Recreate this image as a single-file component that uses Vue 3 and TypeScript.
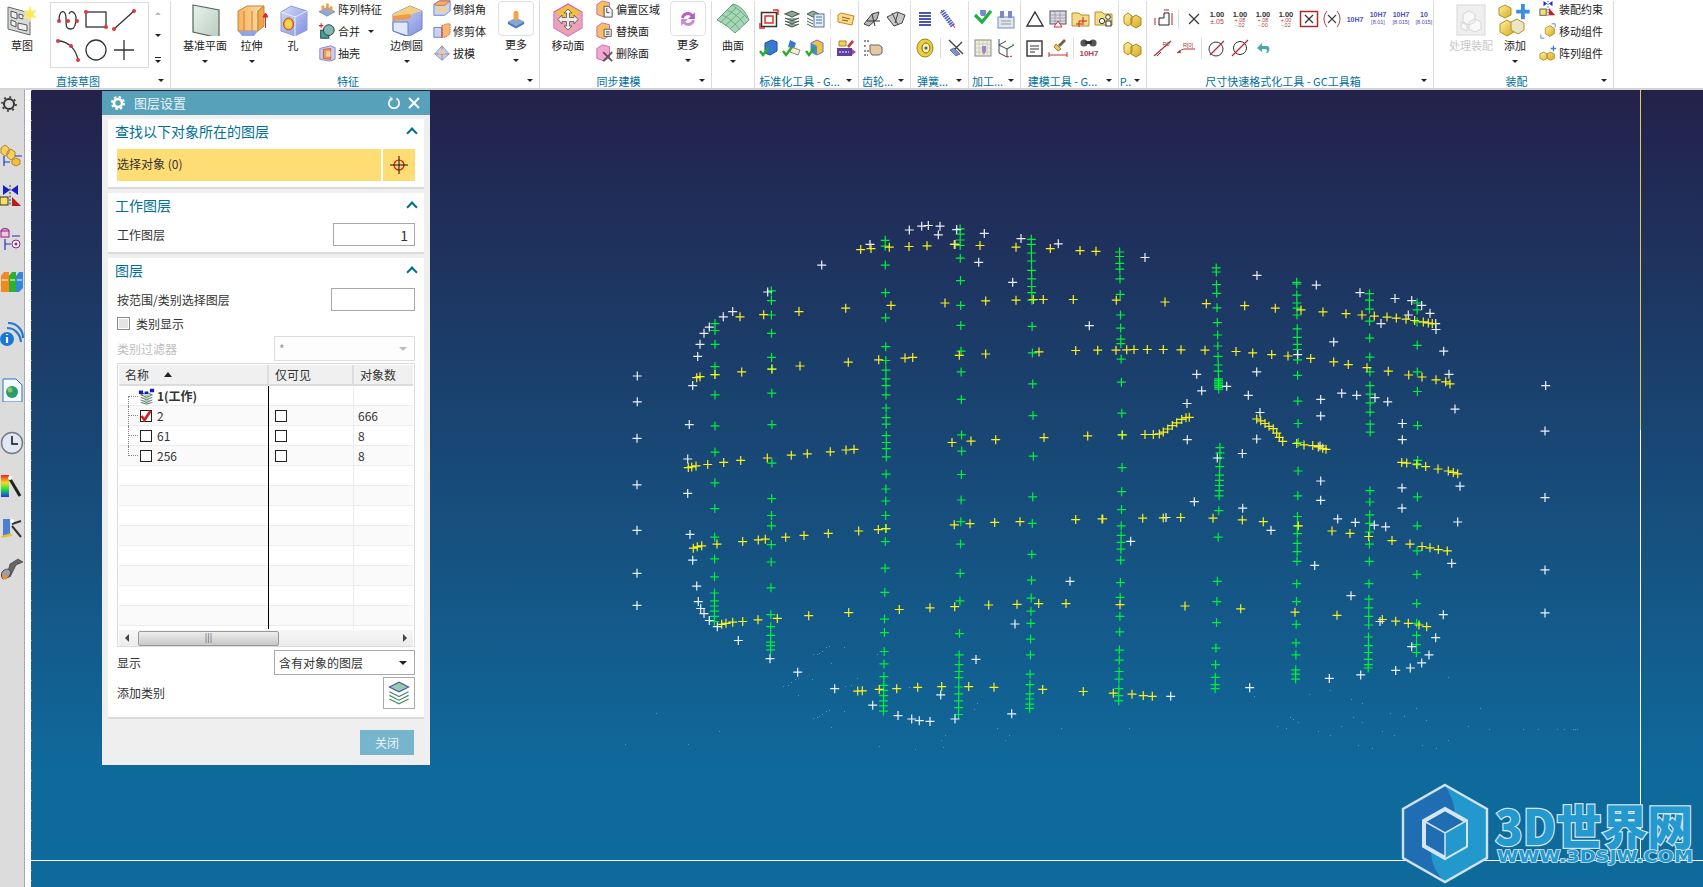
<template>
  <div class="app">
    <!-- shared icon symbols -->
    <svg class="defs" aria-hidden="true">
      <defs>
        <linearGradient id="gPlane" x1="0" y1="0" x2="1" y2="1"><stop offset="0" stop-color="#e9f2ec" /><stop offset="1" stop-color="#b9cdc0" /></linearGradient>
        <linearGradient id="gOrange" x1="0" y1="0" x2="1" y2="0"><stop offset="0" stop-color="#f6b25a" /><stop offset="1" stop-color="#fbe0a8" /></linearGradient>
        <linearGradient id="gBlue" x1="0" y1="0" x2="1" y2="1"><stop offset="0" stop-color="#d5dcf8" /><stop offset="1" stop-color="#7f8fe0" /></linearGradient>
        <linearGradient id="gYellow" x1="0" y1="0" x2="1" y2="1"><stop offset="0" stop-color="#fff3a0" /><stop offset="1" stop-color="#d8a820" /></linearGradient>
      </defs>

      <!-- big ribbon icons -->
      <symbol id="sketch" viewBox="0 0 32 32">
        <path d="M2 3 24 9v22L2 25z" fill="#d8dcd8" stroke="#666" />
        <path d="M5 7l6 2v6l-6-2zM13 10l4 1v4l-4-1zM5 16l5 2v5l-5-2zM12 19l9 2v6l-9-2z" fill="#eef0ee" stroke="#555" />
        <path d="M24 2l1.600 5 5.400-1-4 4 4 4-5.400-1L24 18l-1.600-5-5.400 1 4-4-4-4 5.400 1z" fill="#ffe94a" stroke="#f7f3c0" stroke-width=".6" />
      </symbol>
      <symbol id="datum" viewBox="0 0 32 32"><path d="M4 1 30 6v28L4 28z" fill="url(#gPlane)" stroke="#55655c" stroke-width="1.200" /></symbol>
      <symbol id="extrude" viewBox="0 0 32 32">
        <path d="M2 7 11 2h17l-6 5v20H2z" fill="url(#gOrange)" stroke="#c08a3a" />
        <path d="M22 7l6-5v20l-6 5z" fill="#f0a64a" stroke="#c08a3a" />
        <path d="M8 7v20M16 7v20" stroke="#d47a38" fill="none" />
        <path d="M2 27h20l-4 5H6z" fill="#8ea6e8" />
        <path d="M29.500 24V11M27 13l2.500-4 2.500 4z" fill="#d8282a" stroke="#d8282a" />
      </symbol>
      <symbol id="hole" viewBox="0 0 32 32">
        <path d="M4 8 14 2l16 5v19l-12 6L4 27z" fill="url(#gBlue)" stroke="#8e9bd8" />
        <path d="M4 8l14 5 12-6M18 13v19" fill="none" stroke="#e9edfc" />
        <ellipse cx="11.500" cy="20" rx="5" ry="6" fill="#f09a20" stroke="#c85020" />
        <ellipse cx="11.500" cy="20" rx="3.500" ry="4.500" fill="#f5d64a" />
      </symbol>
      <symbol id="blend" viewBox="0 0 32 32">
        <path d="M2 10 19 2l12 5v18l-14 8L2 27z" fill="url(#gBlue)" stroke="#6f7fd0" />
        <path d="M2 10 19 2l12 5-2 1C24 8 20 10 18 13L2 16z" fill="#f5d07a" />
        <path d="M2 12 18 10c3 0 3 3 0 5L2 17z" fill="#ec9a50" />
        <path d="M2 18h15v14L2 27z" fill="#dfe7fa" stroke="#6f7fd0" />
      </symbol>
      <symbol id="more1" viewBox="0 0 32 32">
        <path d="M3 20l13-6 13 6-13 7z" fill="#7fa8d8" />
        <path d="M3 20v4l13 7 13-7v-4l-13 7z" fill="#4a78b8" />
        <rect x="12" y="3" width="8" height="15" rx="3" fill="#f3a648" />
      </symbol>
      <symbol id="moveface" viewBox="0 0 34 34">
        <path d="M3 9 17 1l14 8v16l-14 8-14-8z" fill="#f0c040" stroke="#cf5fb8" stroke-width="1.200" />
        <path d="M3 9l14 8 14-8v16l-14 8-14-8z" fill="#e89ad8" opacity=".75" />
        <path d="M17 6l4 4h-2.500v4.500H23V12l4 4.500-4 4.500v-2.500h-4.500V23H21l-4 4-4-4h2.500v-4.500H11V21l-4-4.500L11 12v2.500h4.500V10H13z" fill="#eee" stroke="#555" stroke-width=".8" />
      </symbol>
      <symbol id="more2" viewBox="0 0 32 32">
        <path d="M6 14a10 10 0 0 1 17-5l3-3v10H16l4-4a6 6 0 0 0-10 3z" fill="#b45cc8" />
        <path d="M26 18a10 10 0 0 1-17 5l-3 3V16h10l-4 4a6 6 0 0 0 10-3z" fill="#c98ad8" />
      </symbol>
      <symbol id="surface" viewBox="0 0 34 34">
        <path d="M1 17 17 1c8 2 13 8 16 16L19 30C13 24 7 20 1 17z" fill="#a6d6b4" stroke="#5fa37a" />
        <path d="M6 12c7 3 13 8 18 15M11 7c7 3 13 8 18 15M16 2c5 3 11 8 15 13M4 20 20 5M9 23 25 8M14 26 29 12" fill="none" stroke="#5f9f78" stroke-width=".8" />
      </symbol>
      <symbol id="asmDisabled" viewBox="0 0 32 32">
        <rect x="2" y="1" width="28" height="30" fill="#efefef" stroke="#d8d8d8" />
        <path d="M8 10l6-3 6 3v8l-6 3-6-3zM14 18l6-3 6 3v7l-6 3-6-3zM6 18l6 3v6l-6-3z" fill="#f8f8f8" stroke="#d6d6d6" />
      </symbol>
      <symbol id="addComp" viewBox="0 0 34 34">
        <path d="M1 5l6-3 6 3v7l-6 3-6-3z" fill="url(#gYellow)" stroke="#b89020" />
        <path d="M2 21l7-4 7 4v8l-7 4-7-4z" fill="url(#gYellow)" stroke="#b89020" />
        <path d="M13 19l6-3 7 4v7l-6 4-7-4z" fill="#e9e6c8" stroke="#b89020" />
        <path d="M25 1h4v6h5v4h-5v6h-4v-6h-5V7h5z" transform="translate(-1 0) scale(.96)" fill="#3d8fe0" />
      </symbol>

      <!-- small ribbon icons -->
      <symbol id="pattern" viewBox="0 0 20 20">
        <path d="M1 13l9-5 9 5-9 5z" fill="#8fa6d8" stroke="#5d78b8" stroke-width=".6" />
        <rect x="4" y="6" width="3" height="6" rx="1" fill="#f0a040" /><rect x="9" y="4" width="3" height="6" rx="1" fill="#f0a040" /><rect x="13" y="7" width="3" height="6" rx="1" fill="#f0a040" />
      </symbol>
      <symbol id="unite" viewBox="0 0 20 20">
        <path d="M1 4h5M3.500 1.500v5" stroke="#d82020" stroke-width="1.200" />
        <rect x="3" y="9" width="9" height="9" fill="#3ca49c" stroke="#333" />
        <circle cx="12" cy="9" r="6" fill="#7fb8b0" stroke="#333" />
      </symbol>
      <symbol id="shell" viewBox="0 0 20 20">
        <path d="M2 5l12-3 5 2v13l-6 2-11-2z" fill="#c8ccf0" stroke="#7f88c0" />
        <path d="M6 6l8-1v12l-8-1z" fill="#f09858" stroke="#c05838" />
        <path d="M9 8h5v6H9z" fill="#f8d0a0" />
      </symbol>
      <symbol id="chamfer" viewBox="0 0 20 20">
        <path d="M1 5l6-4h12v11l-6 5H1z" fill="#c8d4f4" stroke="#6a7ac8" />
        <path d="M1 5l6-4h12l-6 5H4z" fill="#f0b060" stroke="#d06860" />
        <path d="M5 8h10v5H5z" fill="#f8d080" />
      </symbol>
      <symbol id="trim" viewBox="0 0 20 20">
        <path d="M1 6h9v11H1z" fill="#c8d4f4" stroke="#6a7ac8" />
        <path d="M10 4l5-2h4v11l-5 4h-4z" fill="#f5b878" stroke="#c06030" stroke-dasharray="1.500 1" />
        <path d="M10 6v11" stroke="#d03030" />
      </symbol>
      <symbol id="draft" viewBox="0 0 20 20">
        <path d="M10 2 2 11l8 7 8-7z" fill="#bcd2f0" stroke="#7a9ad0" />
        <path d="M10 2v16M2 11h16" stroke="#e05050" stroke-width=".8" />
        <path d="M6 11l4-6 4 6z" fill="#f6c0a0" />
      </symbol>
      <symbol id="offset" viewBox="0 0 20 20">
        <path d="M1 5l6-4 8 2v12l-6 4-8-3z" fill="#f5c060" stroke="#d060b0" />
        <path d="M9 7h5l4 4v8H9z" fill="#f4f4f4" stroke="#444" />
        <path d="M12 9v5h3" stroke="#444" fill="none" />
      </symbol>
      <symbol id="replace" viewBox="0 0 20 20">
        <path d="M1 5l6-4 8 2v12l-6 4-8-3z" fill="#f5c060" stroke="#d060b0" />
        <path d="M9 8h8v8H9z" fill="#f0f0f0" stroke="#555" />
        <path d="M11 11h4M11 13.500h4" stroke="#333" />
      </symbol>
      <symbol id="deleteFace" viewBox="0 0 20 20">
        <path d="M1 5l6-4 8 2v12l-6 4-8-3z" fill="#f0a8d0" stroke="#d060b0" />
        <path d="M8 9l10 10M18 9 8 19" stroke="#555" stroke-width="2" />
      </symbol>
      <symbol id="mate" viewBox="0 0 20 20">
        <path d="M5 1l4 3-4 3zM15 1l-4 3 4 3z" fill="#2030c8" />
        <rect x="1" y="10" width="7" height="7" fill="#f5e070" stroke="#555" />
        <path d="M11 17V9l7 8z" fill="#c82020" />
        <path d="M10 1v17" stroke="#333" stroke-dasharray="1.500 1.500" />
      </symbol>
      <symbol id="moveComp" viewBox="0 0 20 20">
        <path d="M7 7l5-3 5 3v6l-5 3-5-3z" fill="url(#gYellow)" stroke="#b89020" />
        <path d="M2 14v4h4M14 2h4v4" fill="none" stroke="#4a88c8" />
      </symbol>
      <symbol id="patComp" viewBox="0 0 20 20">
        <path d="M1 11l4-2 4 2v5l-4 2-4-2zM9 11l4-2 4 2v5l-4 2-4-2z" fill="url(#gYellow)" stroke="#b89020" />
        <path d="M16 2v6M13 5h6" stroke="#3d7fd0" stroke-width="1.400" />
      </symbol>

      <!-- tool grid icons -->
      <symbol id="tFrame" viewBox="0 0 20 20">
        <rect x="2.500" y="3.500" width="15" height="14" fill="none" stroke="#333" stroke-width="1.500" />
        <rect x="6" y="7" width="8" height="7" fill="#fff" stroke="#e03020" stroke-width="1.500" />
        <path d="M14 1h5v5M1 14v5h5" fill="none" stroke="#e03020" stroke-width="1.500" />
      </symbol>
      <symbol id="tStack" viewBox="0 0 20 20"><path d="M3 5l7-3 7 3-7 3zM3 9l7 3 7-3M3 12l7 3 7-3M3 15l7 3 7-3" fill="#8fa898" stroke="#4a5a50" stroke-width="1.100" /></symbol>
      <symbol id="tWork" viewBox="0 0 20 20"><path d="M3 8l7-3 7 3-7 3zM3 11l7 3 7-3M3 14l7 3 7-3M3 17l7 2 7-2" fill="#bcd8c0" stroke="#5a6a60" /><path d="M1 3h5v4H1zM14 1h5v4h-5zM8 4h4v3H8z" fill="#1020c0" /></symbol>
      <symbol id="tList" viewBox="0 0 20 20">
        <path d="M2 5l6-3 6 3-6 3zM2 9l6 3M2 12l6 3M2 15l6 3" fill="#98b0a0" stroke="#4a5a50" />
        <rect x="9" y="5" width="10" height="13" fill="#e8eef8" stroke="#5a7098" />
        <path d="M11 8h6M11 11h6M11 14h6" stroke="#3a78b0" />
      </symbol>
      <symbol id="tTag" viewBox="0 0 20 20"><path d="M2 6l3-2 13 3-2 9L2 13z" fill="#fbdc88" stroke="#d08020" /><path d="M6 8l8 2M6 11l6 1" stroke="#806020" /></symbol>
      <symbol id="tCheckA" viewBox="0 0 20 20"><path d="M6 5l7-3 5 2v9l-7 4-5-2z" fill="#3a78d8" stroke="#20509a" /><path d="M1 13l3 4 6-8" fill="none" stroke="#2eaa2e" stroke-width="2.400" /></symbol>
      <symbol id="tCheckB" viewBox="0 0 20 20"><path d="M8 2l6 3-2 6-6-2z" fill="#3a78d8" /><path d="M9 9l9 3-2 5-8-3z" fill="#f8f0c0" stroke="#888" /><path d="M1 13l3 4 6-8" fill="none" stroke="#2eaa2e" stroke-width="2.400" /></symbol>
      <symbol id="tCheckC" viewBox="0 0 20 20"><path d="M6 5l6-3 6 3v9l-6 3-6-3z" fill="#f5c040" stroke="#5a7ac8" /><path d="M6 5l6 3v9l-6-3z" fill="#4a88d8" /><path d="M1 13l3 4 6-8" fill="none" stroke="#2eaa2e" stroke-width="2.400" /></symbol>
      <symbol id="tChart" viewBox="0 0 20 20"><path d="M3 3h7v5H3z" fill="#f5d060" stroke="#b08020" /><path d="M11 8l5-6 2 2-5 6z" fill="#c04040" /><rect x="1" y="10" width="15" height="8" fill="#6040a0" /><path d="M3 14h10" stroke="#fff" stroke-dasharray="2 1" /><path d="M16 11l4 3-4 3z" fill="#c040a0" /></symbol>
      <symbol id="tGearA" viewBox="0 0 20 20"><path d="M1 15l8-10 7-2-2 7-8 7z" fill="#b8b8b8" stroke="#444" /><path d="M9 5l3 12M4 12h13" stroke="#333" /></symbol>
      <symbol id="tGearB" viewBox="0 0 20 20"><path d="M1 8l7 9 8-3 3-8-8-3z" fill="#c8c8c8" stroke="#444" /><path d="M6 4l6 12M12 4l-3 10" stroke="#444" /></symbol>
      <symbol id="tHand" viewBox="0 0 20 20"><path d="M1 3h5M1 8h3M1 13h5M1 17h4" stroke="#222" stroke-dasharray="2 1" /><path d="M7 7h9l3 2v6l-3 2H9l-2-3z" fill="#e8c8a0" stroke="#666" /></symbol>
      <symbol id="tSpring" viewBox="0 0 20 20"><path d="M4 4h12M4 7h12M4 10h12M4 13h12M4 16h12" stroke="#4a58b0" stroke-width="2.200" /></symbol>
      <symbol id="tSpringB" viewBox="0 0 20 20"><path d="M4 2 15 17" stroke="#5060c0" stroke-width="5" stroke-dasharray="1.600 .8" /><path d="M3 1l2 2M15 16l2 3" stroke="#d03030" /></symbol>
      <symbol id="tCoil" viewBox="0 0 20 20"><ellipse cx="10" cy="10" rx="8" ry="9" fill="#e8d040" stroke="#a08020" /><ellipse cx="11" cy="10" rx="4" ry="5" fill="#f8f0b0" stroke="#806818" /><circle cx="11" cy="10" r="1.500" fill="#555" /></symbol>
      <symbol id="tScissor" viewBox="0 0 20 20"><path d="M3 2l14 14M6 14 16 4" stroke="#444" stroke-width="1.400" /><path d="M4 12l4-2 6 6-4 2z" fill="#7a90d8" stroke="#444" stroke-width=".6" /></symbol>
      <symbol id="tMill" viewBox="0 0 20 20"><path d="M7 1h6v4l-1 2h-4L7 5z" fill="#7a8ad0" /><path d="M2 6l7 7 9-11" fill="none" stroke="#20b040" stroke-width="3.200" /></symbol>
      <symbol id="tMillB" viewBox="0 0 20 20"><rect x="2" y="8" width="16" height="11" fill="#e0e8f0" stroke="#7a8ab0" /><path d="M4 2h4v7H4zM12 2h4v7h-4z" fill="#7a8ad0" /><path d="M5 12h10M5 15h10" stroke="#999" /></symbol>
      <symbol id="tSheet" viewBox="0 0 20 20"><rect x="2" y="2" width="16" height="16" fill="#f0eed8" stroke="#888" /><path d="M2 6h16M2 10h16M2 14h16M6 2v16M10 2v16M14 2v16" stroke="#bbb" stroke-width=".6" /><path d="M9 8h4v5l-2 4-2-4z" fill="#a080d0" /></symbol>
      <symbol id="tAxis" viewBox="0 0 20 20"><path d="M3 7l8 4 7-4M3 7v8l8 4V11M3 7l7-4" fill="none" stroke="#444" /><path d="M3 7V1" stroke="#2040c0" /><path d="M11 11l7-5" stroke="#20a040" stroke-dasharray="2 1" /><path d="M11 19l6-1" stroke="#d02020" stroke-dasharray="2 1" /></symbol>
      <symbol id="tTriangle" viewBox="0 0 20 20"><path d="M10 3 18 17H2z" fill="#fff" stroke="#333" stroke-width="1.400" /></symbol>
      <symbol id="tTable" viewBox="0 0 20 20"><rect x="2" y="2" width="16" height="13" fill="#dcd8ec" stroke="#555" /><path d="M2 6h16M2 9h16M2 12h16M7 2v13M12 2v13" stroke="#888" stroke-width=".6" /><path d="M10 12l4 6H6z" fill="#fff" stroke="#d03030" /></symbol>
      <symbol id="tFolderA" viewBox="0 0 20 20"><path d="M1 4h7l2 2h8v11H1z" fill="#f5dc88" stroke="#b09030" /><path d="M8 12h8M12 8v8M5 15h6M8 12v6" stroke="#d02020" /></symbol>
      <symbol id="tFolderB" viewBox="0 0 20 20"><path d="M1 3h7l2 2h8v11H1z" fill="#f5dc88" stroke="#b09030" /><circle cx="8" cy="12" r="2.600" fill="#fff" stroke="#333" /><rect x="12" y="12" width="5" height="5" fill="#fff" stroke="#333" /><circle cx="14" cy="8" r="2.300" fill="#fff" stroke="#333" /></symbol>
      <symbol id="tNote" viewBox="0 0 20 20"><rect x="2" y="3" width="15" height="15" fill="#fff" stroke="#333" stroke-width="1.400" /><path d="M5 8h9M5 11h9M5 14h5" stroke="#333" /></symbol>
      <symbol id="tBrush" viewBox="0 0 20 20"><path d="M16 1l2 2-6 6-2-2z" fill="#706040" /><path d="M8 6l5 5-3 2-4-4z" fill="#e8c860" stroke="#a08020" /><path d="M1 14v5M19 14v5M1 17h18" stroke="#c03030" /></symbol>
      <symbol id="tBino" viewBox="0 0 20 20"><circle cx="5" cy="5" r="3.600" fill="#555" /><circle cx="14" cy="5" r="3.600" fill="#555" /><rect x="6" y="3" width="7" height="3" fill="#333" /></symbol>
      <symbol id="tCubes" viewBox="0 0 20 20"><path d="M1 7l4-3 4 3v7l-4 3-4-3zM8 9l5-3 5 3v7l-5 3-5-3z" fill="url(#gYellow)" stroke="#a88820" /></symbol>
      <symbol id="tStep" viewBox="0 0 20 20"><path d="M6 16V9h5V4h5v12z" fill="#fff" stroke="#222" /><path d="M2 9v7M19 4v12M11 1h5" stroke="#c82020" /></symbol>
      <symbol id="tX" viewBox="0 0 20 20"><path d="M5 5l10 10M15 5 5 15" stroke="#333" stroke-width="1.200" /></symbol>
      <symbol id="tXBox" viewBox="0 0 20 20"><rect x="1.500" y="2.500" width="17" height="15" fill="none" stroke="#b02828" stroke-width="1.500" /><path d="M6 6l8 8M14 6l-8 8" stroke="#333" stroke-width="1.200" /></symbol>
      <symbol id="tXParen" viewBox="0 0 20 20"><path d="M5 2C1 7 1 13 5 18M15 2c4 5 4 11 0 16" fill="none" stroke="#b04040" /><path d="M6 6l8 8M14 6l-8 8" stroke="#444" stroke-width="1.200" /></symbol>
      <symbol id="tRa" viewBox="0 0 20 20"><path d="M1 18 18 3" stroke="#b03030" stroke-width="1.200" /><path d="M4 18l4-4" stroke="#b03030" /></symbol>
      <symbol id="tRb" viewBox="0 0 20 20"><path d="M1 15c4-3 6-4 8-4h10" fill="none" stroke="#b03030" /><path d="M1 15l3-3 1 3z" fill="#b03030" /></symbol>
      <symbol id="tDia" viewBox="0 0 20 20"><circle cx="9" cy="11" r="7" fill="none" stroke="#333" /><path d="M3 17 17 3" stroke="#c02828" stroke-width="1.200" /></symbol>
      <symbol id="tDiaB" viewBox="0 0 20 20"><circle cx="10" cy="10" r="6.500" fill="none" stroke="#333" /><path d="M2 18 18 2" stroke="#c02828" stroke-width="1.200" /></symbol>
      <symbol id="tBack" viewBox="0 0 20 20"><path d="M4 10l5-5v3h4c3 0 4 2 3 5-1 2-2 2-3 2l1-2c0-1 0-2-2-2H9v3z" fill="#4aa8a8" /></symbol>

      <!-- resource bar -->
      <symbol id="lGear" viewBox="0 0 24 24"><circle cx="9" cy="12" r="5" fill="none" stroke="#333" stroke-width="2" /><circle cx="9" cy="12" r="7" fill="none" stroke="#333" stroke-width="1.600" stroke-dasharray="2 3.500" /></symbol>
      <symbol id="lAsm" viewBox="0 0 24 24"><path d="M1 5l4-3 4 3v5l-4 3-4-3zM7 9l4-3 4 3v5l-4 3-4-3z" fill="#f5d060" stroke="#b08820" /><path d="M15 13h7M4 13v10M4 19h6" stroke="#1838c0" stroke-width="1.200" /><path d="M12 17l4-2 4 2v4l-4 2-4-2z" fill="#f5c040" stroke="#b08820" /></symbol>
      <symbol id="lMate" viewBox="0 0 24 24"><path d="M3 1l7 5-7 5zM18 1l-7 5 7 5z" fill="#1820c8" /><rect x="0" y="13" width="8" height="8" fill="#f5e060" stroke="#333" /><path d="M12 13v9h9z" fill="#c01818" /><path d="M10 1v21" stroke="#333" stroke-dasharray="2 1.500" /></symbol>
      <symbol id="lPart" viewBox="0 0 24 24"><ellipse cx="5" cy="4" rx="4" ry="2.500" fill="#e8a8d0" stroke="#902080" /><rect x="1" y="4" width="8" height="6" fill="#f0c8e0" stroke="#902080" /><path d="M12 9h8M5 12v11M5 17h6" stroke="#1838c0" stroke-width="1.200" /><circle cx="16" cy="17" r="4" fill="#fff" stroke="#902080" /><circle cx="16" cy="17" r="1.500" fill="#902080" /></symbol>
      <symbol id="lLib" viewBox="0 0 24 24"><path d="M1 7l3-4h5v20H1z" fill="#f08a20" /><path d="M9 7l3-4h4v20H9z" fill="#30b030" /><path d="M16 7l3-4h4v16l-4 4h-3z" fill="#3088e0" /><path d="M2 11h6M10 11h5M17 11h5" stroke="#fff" /></symbol>
      <symbol id="lInfo" viewBox="0 0 24 24"><path d="M8 5c7 0 13 5 14 14M9 0c9 0 15 7 15 15" transform="translate(-1 1)" fill="none" stroke="#2878d0" stroke-width="2.200" /><circle cx="7" cy="17" r="7" fill="#1878d8" /><path d="M7 12v1M7 15v6" stroke="#fff" stroke-width="2.200" /></symbol>
      <symbol id="lDoc" viewBox="0 0 24 24"><path d="M3 1h13l6 6v17H3z" fill="#f4f8ff" stroke="#3070b8" /><circle cx="12" cy="14" r="6" fill="#2e9a70" /><circle cx="10" cy="12" r="2.500" fill="#8ac860" /></symbol>
      <symbol id="lClock" viewBox="0 0 24 24"><circle cx="12" cy="12" r="10.500" fill="#dfe8f4" stroke="#778" stroke-width="1.400" /><path d="M12 5v8h6" fill="none" stroke="#111" stroke-width="1.500" /></symbol>
      <symbol id="lPalette" viewBox="0 0 24 24"><defs><linearGradient id="gSpec" x1="0" y1="0" x2="0" y2="1"><stop offset="0" stop-color="#f02020" /><stop offset=".35" stop-color="#f0e020" /><stop offset=".65" stop-color="#20e040" /><stop offset="1" stop-color="#2030f0" /></linearGradient></defs><rect x="1" y="1" width="8" height="22" fill="url(#gSpec)" /><path d="M10 5l10 17" stroke="#222" stroke-width="3" /><circle cx="10" cy="4" r="2" fill="#fff" /></symbol>
      <symbol id="lRole" viewBox="0 0 24 24"><rect x="3" y="3" width="7" height="17" fill="#4a80d0" /><path d="M1 20l10-3 1 3-10 2z" fill="#e8c040" /><path d="M12 8l9-3M12 10l9 11" stroke="#333" stroke-width="2" /><circle cx="12" cy="5" r="2" fill="#fff" /></symbol>
      <symbol id="lTool" viewBox="0 0 24 24"><path d="M10 7l8-5 5 3-7 3-6 12-3-2z" fill="#666" stroke="#333" stroke-width=".6" /><path d="M3 14c3-3 7-2 8 1l-2 5-6 2c-2-2-2-6 0-8z" fill="#9aa0b0" stroke="#444" /><circle cx="5" cy="20" r="2.500" fill="#f09020" /></symbol>
    </svg>

    <header class="ribbon">
      <section v-for="group in ribbon" :key="group.label" class="group" :style="{ width: group.width + 'px' }">
        <div class="group-body" :style="{ paddingLeft: (group.pad ?? 0) + 'px' }">
          <template v-for="(item, i) in group.items" :key="i">
            <div v-if="item.kind === 'big'" class="big" :class="{ disabled: item.disabled }" :style="{ width: item.width + 'px' }">
              <div class="big-icon" :class="{ boxed: item.boxed }">
                <svg :width="item.size ?? 32" :height="item.size ?? 32"><use :href="'#' + item.icon" /></svg>
              </div>
              <span class="big-label">{{ item.label }}</span>
              <i v-if="item.arrow" class="caret"></i>
            </div>

            <div v-else-if="item.kind === 'col'" class="small-col" :style="{ width: item.width + 'px', paddingLeft: (item.pad ?? 3) + 'px' }">
              <div v-for="row in item.rows" :key="row.label" class="small-row">
                <svg width="18" height="18"><use :href="'#' + row.icon" /></svg>
                <span>{{ row.label }}</span>
                <i v-if="row.arrow" class="caret"></i>
              </div>
            </div>

            <div v-else-if="item.kind === 'gallery'" class="gallery-wrap">
              <div class="gallery">
                <svg width="28" height="28" viewBox="0 0 28 28"><path d="M5 15C5 3 12 3 12 12s0 11 5 11 5-10 5-12-4-9-7-3" fill="none" stroke="#333" stroke-width="1.300" /><circle cx="5" cy="15" r="2" fill="#d83a3a" /><circle cx="14" cy="15" r="2" fill="#d83a3a" /><circle cx="23" cy="15" r="2" fill="#d83a3a" /></svg>
                <svg width="28" height="28" viewBox="0 0 28 28"><rect x="4" y="6" width="20" height="15" fill="none" stroke="#333" stroke-width="1.300" /><circle cx="4" cy="6" r="2" fill="#d83a3a" /><circle cx="24" cy="21" r="2" fill="#d83a3a" /></svg>
                <svg width="28" height="28" viewBox="0 0 28 28"><path d="M4 23 24 5" stroke="#333" stroke-width="1.300" /><circle cx="4" cy="23" r="2" fill="#d83a3a" /><circle cx="24" cy="5" r="2" fill="#d83a3a" /></svg>
                <svg width="28" height="28" viewBox="0 0 28 28"><path d="M4 5c10 0 18 8 20 19" fill="none" stroke="#333" stroke-width="1.300" /><circle cx="4" cy="5" r="2" fill="#d83a3a" /><circle cx="17" cy="10" r="2" fill="#d83a3a" /><circle cx="24" cy="24" r="2" fill="#d83a3a" /></svg>
                <svg width="28" height="28" viewBox="0 0 28 28"><circle cx="14" cy="14" r="10" fill="none" stroke="#333" stroke-width="1.300" /></svg>
                <svg width="28" height="28" viewBox="0 0 28 28"><path d="M14 4v20M4 14h20" stroke="#333" stroke-width="1.300" /></svg>
              </div>
              <div class="gallery-scroll">
                <i class="caret up"></i>
                <i class="caret"></i>
                <i class="caret bar"></i>
              </div>
            </div>

            <div v-else class="tool-grid" :style="{ paddingLeft: item.pad + 'px' }">
              <div v-for="(row, r) in item.rows" :key="r" class="tool-row">
                <template v-for="(cell, c) in row" :key="c">
                  <span v-if="cell === '|'" class="tool-sep"></span>
                  <svg v-else-if="typeof cell === 'string'" width="20" height="20"><use :href="'#' + cell" /></svg>
                  <svg v-else width="20" height="20" viewBox="0 0 20 20">
                    <use v-if="cell.icon" :href="'#' + cell.icon" width="20" height="20" />
                    <text
                      v-for="line in cell.lines"
                      :key="line.t"
                      class="tool-text"
                      :x="line.x ?? 10"
                      :y="line.y"
                      :font-size="line.size"
                      :fill="line.color"
                      :font-weight="line.bold ? 700 : 400"
                    >{{ line.t }}</text>
                  </svg>
                </template>
              </div>
            </div>
          </template>
        </div>
        <div v-if="group.label" class="group-label">
          <span>{{ group.label }}</span>
          <i class="caret"></i>
        </div>
      </section>
    </header>

    <main class="workspace">
      <nav class="resource-bar">
        <svg v-for="tool in resourceTools" :key="tool.icon" width="24" height="24" :style="{ marginTop: tool.gap + 'px' }">
          <use :href="'#' + tool.icon" />
        </svg>
      </nav>

      <div class="viewport">
        <svg class="canvas" width="1672" height="797" viewBox="31 90 1672 797">
          <path d="M31.500 90V887" stroke="#a8b8cc" stroke-width="1" stroke-dasharray="1 9" opacity=".7" />
          <path :d="dotPath" stroke="#8f9fd0" stroke-width="1" fill="none" opacity=".7" />
          <path d="M1640.500 90V860" stroke="#fff" stroke-width="1" />
          <path d="M1640.500 90V430" stroke="#e8c850" stroke-width="1" />
          <path d="M31 860.500H1703" stroke="#fff" stroke-width="1" />
          <path :d="greenPath" stroke="#00f038" stroke-width="1.200" fill="none" />
          <path :d="whitePath" stroke="#fff" stroke-width="1.200" fill="none" opacity=".92" />
          <path :d="yellowPath" stroke="#fbf01c" stroke-width="1.200" fill="none" />

          <!-- watermark -->
          <g>
            <path d="M1445 785l42 24v49l-42 24-42-24v-49z" fill="#2398cd" />
            <path d="M1445 785c10 18 15 32 0 46l-42 27v-49zM1445 831c-16 12-20 30 0 51l-42-24z" fill="#1f6db2" />
            <path d="M1445 785l42 24v49l-42 24-42-24v-49z" fill="none" stroke="#cfe2ee" stroke-width="2.400" />
            <path d="M1445 809l21 12v25l-21 12-21-12v-25z" fill="#1f6db2" stroke="#d4e6f0" stroke-width="4" />
            <path d="M1445 833l21-12v25l-21 12z" fill="#2398cd" />
            <path d="M1424 821l21 12 21-12M1445 833v25" fill="none" stroke="#d4e6f0" stroke-width="1.500" />
            <text x="1495" y="845" class="logo-main" textLength="198" lengthAdjust="spacingAndGlyphs">3D世界网</text>
            <text x="1497" y="862" class="logo-url" textLength="196" lengthAdjust="spacingAndGlyphs">WWW.3DSJW.COM</text>
          </g>
        </svg>

        <!-- floating dialog -->
        <aside class="dialog">
          <div class="dialog-title">
            <svg width="16" height="16" viewBox="0 0 16 16"><circle cx="8" cy="8" r="4" fill="none" stroke="#fff" stroke-width="2.600" /><circle cx="8" cy="8" r="6" fill="none" stroke="#fff" stroke-width="2" stroke-dasharray="2.500 2.200" /></svg>
            <span class="dialog-name">图层设置</span>
            <svg width="14" height="14" viewBox="0 0 14 14"><path d="M9.500 2.500a5.200 5.200 0 1 1-5 0" fill="none" stroke="#fff" stroke-width="1.600" /><path d="M3 .5l2.500 2.500L3 5.500" fill="none" stroke="#fff" stroke-width="1" /></svg>
            <svg width="14" height="14" viewBox="0 0 14 14"><path d="M2 2l10 10M12 2 2 12" stroke="#fff" stroke-width="2" /></svg>
          </div>

          <section class="block">
            <h3 class="block-head">查找以下对象所在的图层<i class="chevron"></i></h3>
            <div class="select-row">
              <div class="select-field">选择对象 (0)</div>
              <div class="select-btn">
                <svg width="20" height="20" viewBox="0 0 20 20"><circle cx="10" cy="10" r="5" fill="none" stroke="#e01010" stroke-width="1.200" /><path d="M10 1v18M1 10h18" stroke="#111" /></svg>
              </div>
            </div>
          </section>

          <section class="block">
            <h3 class="block-head">工作图层<i class="chevron"></i></h3>
            <div class="form-row">
              <span>工作图层</span>
              <div class="input num">1</div>
            </div>
          </section>

          <section class="block last-block">
            <h3 class="block-head">图层<i class="chevron"></i></h3>
            <div class="form-row">
              <span>按范围/类别选择图层</span>
              <div class="input wide"></div>
            </div>
            <label class="check-row"><i class="check-disabled"></i>类别显示</label>
            <div class="form-row filter">
              <span class="muted">类别过滤器</span>
              <div class="combo disabled"><span>*</span><i class="caret grey"></i></div>
            </div>

            <div class="layer-table">
              <div class="table-head">
                <div class="th first">名称<i class="sort-up"></i></div>
                <div class="th">仅可见</div>
                <div class="th last">对象数</div>
              </div>
              <div v-for="(row, i) in layerRows" :key="i" class="table-row">
                <div class="td first">
                  <template v-if="row.name">
                    <span class="branch" :class="{ top: i === 0, end: i === 3 }"></span>
                    <svg v-if="row.work" class="stack-icon" width="17" height="17"><use href="#tWork" /></svg>
                    <span v-else class="box" :class="{ on: row.checked }">
                      <svg v-if="row.checked" width="12" height="12" viewBox="0 0 12 12"><path d="M1.500 6l3 4 6-9" fill="none" stroke="#e01818" stroke-width="2.600" /></svg>
                    </span>
                    <span class="layer-name" :class="{ bold: row.work }">{{ row.name }}</span>
                  </template>
                </div>
                <div class="td"><span v-if="row.count" class="box"></span></div>
                <div class="td last">{{ row.count }}</div>
              </div>
              <div class="table-row filler"><div class="td first"></div><div class="td"></div><div class="td last"></div></div>
              <div class="hscroll">
                <i class="arrow-left"></i>
                <div class="hthumb">|||</div>
                <i class="arrow-right"></i>
              </div>
            </div>

            <div class="form-row show-row">
              <span>显示</span>
              <div class="combo"><span>含有对象的图层</span><i class="caret"></i></div>
            </div>
            <div class="form-row add-row">
              <span>添加类别</span>
              <div class="icon-btn">
                <svg width="24" height="24" viewBox="0 0 20 20"><path d="M2 5l8-4 8 4-8 4z" fill="#8fd0a8" stroke="#5a50b8" /><path d="M2 9l8 4 8-4M2 12l8 4 8-4M2 15l8 4 8-4" fill="none" stroke="#4a8a68" /></svg>
              </div>
            </div>
          </section>

          <footer class="dialog-foot"><button class="close-btn" type="button">关闭</button></footer>
        </aside>
      </div>
    </main>
  </div>
</template>

<script setup lang="ts">
type SmallRow = { label: string; icon: string; arrow?: boolean }
type TextLine = { t: string; y: number; size: number; color: string; x?: number; bold?: boolean }
type ToolCell = string | { icon?: string; lines: TextLine[] }
type RibbonItem =
  | { kind: 'big'; label: string; icon: string; width: number; size?: number; arrow?: boolean; boxed?: boolean; disabled?: boolean }
  | { kind: 'col'; width: number; pad?: number; rows: SmallRow[] }
  | { kind: 'gallery' }
  | { kind: 'grid'; pad: number; rows: ToolCell[][] }

interface RibbonGroup {
  label: string
  width: number
  pad?: number
  items: RibbonItem[]
}

const RED = '#b04040'
const DARK = '#333'
const VIOLET = '#4a50c0'

// small dimension buttons whose face is just a number
const tolerance = (top: string, bottom?: string): ToolCell => ({
  lines: [
    { t: '1.00', y: 8, size: 7.5, color: DARK, bold: true },
    ...(bottom
      ? [
          { t: top, y: 13, size: 5.5, color: RED },
          { t: bottom, y: 18, size: 5.5, color: RED },
        ]
      : [{ t: top, y: 15, size: 7, color: RED }]),
  ],
})

const fit = (top: string, bottom?: string): ToolCell => ({
  lines: [
    { t: top, y: bottom ? 8 : 13, size: 7, color: VIOLET, bold: true },
    ...(bottom ? [{ t: bottom, y: 15, size: 5.5, color: VIOLET }] : []),
  ],
})

const ribbon: RibbonGroup[] = [
  {
    label: '直接草图',
    width: 171,
    items: [
      { kind: 'big', label: '草图', icon: 'sketch', width: 44 },
      { kind: 'gallery' },
    ],
  },
  {
    label: '特征',
    width: 369,
    pad: 7,
    items: [
      { kind: 'big', label: '基准平面', icon: 'datum', width: 54, arrow: true },
      { kind: 'big', label: '拉伸', icon: 'extrude', width: 39, arrow: true },
      { kind: 'big', label: '孔', icon: 'hole', width: 44 },
      {
        kind: 'col',
        width: 68,
        rows: [
          { label: '阵列特征', icon: 'pattern' },
          { label: '合并', icon: 'unite', arrow: true },
          { label: '抽壳', icon: 'shell' },
        ],
      },
      { kind: 'big', label: '边倒圆', icon: 'blend', width: 47, arrow: true },
      {
        kind: 'col',
        width: 63,
        rows: [
          { label: '倒斜角', icon: 'chamfer' },
          { label: '修剪体', icon: 'trim' },
          { label: '拔模', icon: 'draft' },
        ],
      },
      { kind: 'big', label: '更多', icon: 'more1', width: 46, size: 20, arrow: true, boxed: true },
    ],
  },
  {
    label: '同步建模',
    width: 172,
    pad: 3,
    items: [
      { kind: 'big', label: '移动面', icon: 'moveface', width: 50, size: 34 },
      {
        kind: 'col',
        width: 72,
        rows: [
          { label: '偏置区域', icon: 'offset' },
          { label: '替换面', icon: 'replace' },
          { label: '删除面', icon: 'deleteFace' },
        ],
      },
      { kind: 'big', label: '更多', icon: 'more2', width: 46, size: 22, arrow: true, boxed: true },
    ],
  },
  {
    label: '',
    width: 43,
    items: [{ kind: 'big', label: '曲面', icon: 'surface', width: 42, size: 34, arrow: true }],
  },
  {
    label: '标准化工具 - G...',
    width: 104,
    items: [
      {
        kind: 'grid',
        pad: 4,
        rows: [
          ['tFrame', 'tStack', 'tList', '|', 'tTag'],
          ['tCheckA', 'tCheckB', 'tCheckC', '|', 'tChart'],
        ],
      },
    ],
  },
  {
    label: '齿轮...',
    width: 52,
    items: [{ kind: 'grid', pad: 4, rows: [['tGearA', 'tGearB'], ['tHand']] }],
  },
  {
    label: '弹簧...',
    width: 58,
    items: [{ kind: 'grid', pad: 4, rows: [['tSpring', 'tSpringB'], ['tCoil', '|', 'tScissor']] }],
  },
  {
    label: '加工...',
    width: 52,
    items: [{ kind: 'grid', pad: 4, rows: [['tMill', 'tMillB'], ['tSheet', 'tAxis']] }],
  },
  {
    label: '建模工具 - G...',
    width: 98,
    items: [
      {
        kind: 'grid',
        pad: 4,
        rows: [
          ['tTriangle', 'tTable', 'tFolderA', 'tFolderB'],
          [
            'tNote',
            'tBrush',
            '|',
            { icon: 'tBino', lines: [{ t: '10H7', y: 18, size: 8, color: '#b04050', bold: true }] },
          ],
        ],
      },
    ],
  },
  {
    label: 'P..',
    width: 28,
    items: [{ kind: 'grid', pad: 4, rows: [['tCubes'], ['tCubes']] }],
  },
  {
    label: '尺寸快速格式化工具 - GC工具箱',
    width: 287,
    items: [
      {
        kind: 'grid',
        pad: 6,
        rows: [
          [
            'tStep',
            '|',
            'tX',
            tolerance('±.05'),
            tolerance('+.08', '-.02'),
            tolerance('+.08', '-.00'),
            tolerance('+.00', '-.02'),
            'tXBox',
            'tXParen',
            fit('10H7'),
            fit('10H7', '[8.01]'),
            fit('10H7', '[8.015]'),
            fit('10', '[8.015]'),
          ],
          [
            { icon: 'tRa', lines: [{ t: 'R0', x: 13, y: 8, size: 5.5, color: '#b03030' }] },
            { icon: 'tRb', lines: [{ t: 'R[0]', x: 12, y: 9, size: 5.5, color: '#b03030' }] },
            '|',
            'tDia',
            'tDiaB',
            'tBack',
          ],
        ],
      },
    ],
  },
  {
    label: '装配',
    width: 180,
    pad: 7,
    items: [
      { kind: 'big', label: '处理装配', icon: 'asmDisabled', width: 60, disabled: true },
      { kind: 'big', label: '添加', icon: 'addComp', width: 28, size: 34, arrow: true },
      {
        kind: 'col',
        width: 84,
        pad: 10,
        rows: [
          { label: '装配约束', icon: 'mate' },
          { label: '移动组件', icon: 'moveComp' },
          { label: '阵列组件', icon: 'patComp' },
        ],
      },
    ],
  },
]

const resourceTools = [
  { icon: 'lGear', gap: 2 },
  { icon: 'lAsm', gap: 27 },
  { icon: 'lMate', gap: 17 },
  { icon: 'lPart', gap: 19 },
  { icon: 'lLib', gap: 18 },
  { icon: 'lInfo', gap: 29 },
  { icon: 'lDoc', gap: 32 },
  { icon: 'lClock', gap: 29 },
  { icon: 'lPalette', gap: 19 },
  { icon: 'lRole', gap: 18 },
  { icon: 'lTool', gap: 17 },
]

interface LayerRow {
  name?: string
  work?: boolean
  checked?: boolean
  count?: string
}

const layerRows: LayerRow[] = [
  { name: '1(工作)', work: true },
  { name: '2', checked: true, count: '666' },
  { name: '61', count: '8' },
  { name: '256', count: '8' },
  ...Array.from({ length: 8 }, () => ({})),
]

// points are read off 3x crops, so they are kept in crop units
type Pt = [number, number]
const CROP_TOP = 210
const CROP_Y = 1568 / 540
const leftCrop = (x: number, y: number): Pt => [620 + x / 3, CROP_TOP + y / CROP_Y]
const rightCrop = (x: number, y: number): Pt => [1100 + x / 3, CROP_TOP + y / CROP_Y]

const pairs = (list: number[], map: (x: number, y: number) => Pt): Pt[] => {
  const out: Pt[] = []
  for (let i = 0; i < list.length; i += 2) out.push(map(list[i], list[i + 1]))
  return out
}

const crosses = (pts: Pt[], half = 4.5) =>
  pts
    .map(([x, y]) => `M${(x - half).toFixed(1)} ${y.toFixed(1)}h${half * 2}M${x.toFixed(1)} ${(y - half).toFixed(1)}v${half * 2}`)
    .join('')

// green columns drift a little: x at the top, middle and bottom of the crop
const column = (map: (x: number, y: number) => Pt, top: number, mid: number, bottom: number, ys: number[]) =>
  ys.map((y) => {
    const x = y < 700 ? top + ((mid - top) * y) / 700 : mid + ((bottom - mid) * (y - 700)) / 800
    return map(x, y)
  })

const greenPoints: Pt[] = [
  ...column(leftCrop, 285, 285, 282, [330, 350, 390, 455, 478, 537, 627, 703, 792, 867, 950, 1013, 1065, 1112, 1135, 1150, 1165, 1180, 1195]),
  ...column(leftCrop, 453, 456, 450, [235, 263, 305, 358, 428, 462, 532, 623, 735, 838, 887, 917, 972, 1022, 1097, 1175, 1210, 1235, 1255, 1265, 1277]),
  ...column(leftCrop, 795, 799, 790, [88, 105, 160, 240, 313, 397, 437, 465, 490, 510, 537, 575, 603, 622, 655, 675, 693, 717, 767, 810, 845, 887, 925, 963, 1040, 1110, 1188, 1227, 1282, 1318, 1355, 1380, 1395, 1410, 1425, 1440, 1455]),
  ...column(leftCrop, 1020, 1025, 1015, [55, 70, 87, 103, 140, 205, 277, 335, 410, 470, 550, 653, 700, 768, 842, 905, 970, 1055, 1135, 1230, 1292, 1320, 1340, 1358, 1385, 1405, 1425, 1445, 1465]),
  ...column(leftCrop, 1233, 1240, 1228, [85, 100, 125, 148, 175, 200, 222, 240, 262, 338, 415, 505, 597, 715, 833, 910, 1000, 1075, 1127, 1165, 1200, 1246, 1292, 1348, 1378, 1405, 1420, 1435, 1447]),
  ...column(leftCrop, 1497, 1507, 1495, [122, 135, 155, 172, 200, 245, 305, 343, 375, 388, 433, 500, 590, 653, 748, 818, 870, 917, 945, 965, 985, 1017, 1082, 1125, 1180, 1225, 1278, 1307, 1340, 1362, 1390, 1410, 1425]),
  ...column(rightCrop, 345, 360, 343, [168, 180, 217, 242, 284, 327, 363, 395, 425, 450, 468, 490, 495, 500, 505, 510, 515, 520, 690, 705, 720, 745, 770, 785, 800, 815, 830, 873, 950, 1078, 1137, 1198, 1272, 1320, 1357, 1378, 1390]),
  ...column(rightCrop, 588, 595, 585, [210, 215, 247, 270, 285, 305, 345, 370, 390, 405, 435, 480, 555, 620, 675, 758, 830, 890, 917, 940, 968, 992, 1020, 1085, 1137, 1203, 1257, 1292, 1335, 1348, 1362]),
  ...column(rightCrop, 807, 811, 803, [243, 262, 288, 323, 372, 427, 470, 510, 535, 560, 587, 622, 645, 815, 848, 885, 910, 935, 970, 1020, 1085, 1130, 1155, 1180, 1205, 1240, 1265, 1285, 1305, 1320, 1330]),
  ...column(rightCrop, 950, 953, 948, [270, 290, 325, 393, 470, 527, 626, 727, 740, 833, 917, 990, 1058, 1143, 1200, 1235, 1262, 1285]),
]

const whitePoints: Pt[] = [
  ...pairs([605, 160, 868, 58, 905, 47, 925, 45, 960, 47, 955, 72, 1010, 57, 1093, 68, 1203, 83, 1315, 98, 750, 100, 1005, 100, 1076, 152, 1178, 210, 443, 238, 338, 295, 310, 310, 268, 340, 252, 358, 240, 390, 233, 425, 1408, 336, 218, 510, 52, 482, 52, 557, 208, 623, 51, 663, 203, 723, 51, 798, 203, 823, 210, 942, 51, 930, 218, 1017, 51, 1055, 230, 1092, 235, 1137, 242, 1157, 252, 1172, 268, 1192, 292, 1210, 51, 1148, 355, 1250, 450, 1303, 533, 1342, 644, 1390, 758, 1438, 834, 1468, 875, 1478, 898, 1483, 930, 1485, 1005, 1478, 1175, 1463, 962, 1408, 1068, 1305, 1185, 1202, 1350, 1078, 1532, 962], leftCrop),
  ...pairs([135, 138, 471, 190, 649, 218, 780, 240, 885, 257, 935, 263, 965, 277, 925, 305, 990, 300, 1007, 330, 1008, 347, 843, 330, 701, 383, 1031, 410, 1047, 477, 290, 477, 470, 470, 305, 525, 445, 538, 380, 512, 261, 562, 725, 532, 770, 538, 825, 545, 863, 557, 662, 550, 662, 598, 480, 588, 1065, 578, 907, 620, 907, 667, 470, 665, 262, 667, 427, 707, 352, 720, 662, 787, 662, 843, 906, 807, 906, 866, 1080, 802, 283, 847, 428, 866, 198, 893, 513, 930, 713, 897, 766, 907, 823, 915, 857, 920, 1073, 906, 644, 1032, 1055, 1026, 753, 1120, 1030, 1175, 840, 1195, 1007, 1242, 935, 1268, 987, 1292, 965, 1315, 931, 1330, 887, 1337, 782, 1350, 688, 1360, 449, 1387, 212, 1412, 1337, 510, 1335, 642, 1335, 835, 1335, 1045, 1335, 1170, 593, 420, 660, 685], rightCrop),
]

const yellowPoints: Pt[] = [
  ...pairs([722, 115, 753, 112, 808, 108, 867, 106, 921, 104, 1003, 100, 1080, 103, 1188, 108, 1291, 112, 1380, 118, 1428, 120, 813, 277, 975, 270, 1097, 264, 1188, 262, 1240, 260, 1270, 260, 1360, 260, 1489, 262, 360, 310, 431, 304, 537, 295, 677, 285, 230, 487, 240, 484, 285, 478, 365, 470, 456, 462, 540, 453, 685, 442, 776, 435, 855, 430, 878, 428, 1018, 422, 1097, 418, 1257, 412, 1367, 408, 1433, 407, 1488, 407, 1520, 406, 1542, 405, 205, 748, 215, 746, 228, 743, 263, 739, 311, 733, 362, 727, 442, 720, 514, 712, 562, 708, 631, 702, 678, 697, 702, 695, 996, 675, 1053, 671, 1127, 667, 1272, 661, 1403, 656, 1507, 653, 220, 982, 232, 978, 245, 975, 291, 970, 368, 963, 415, 958, 436, 956, 497, 950, 552, 945, 625, 939, 716, 932, 775, 928, 798, 925, 1003, 914, 1050, 911, 1124, 907, 1200, 905, 1367, 899, 1446, 897, 305, 1203, 318, 1200, 338, 1197, 368, 1195, 414, 1190, 472, 1186, 566, 1178, 686, 1169, 838, 1160, 930, 1155, 1004, 1152, 1106, 1147, 1191, 1145, 1256, 1143, 1338, 1143, 1500, 1146, 713, 1397, 727, 1396, 778, 1392, 830, 1390, 893, 1386, 965, 1384, 1046, 1384, 1122, 1386, 1268, 1392, 1390, 1398, 1480, 1403, 1536, 1406], leftCrop),
  ...pairs([195, 267, 319, 272, 434, 278, 526, 285, 603, 290, 669, 296, 738, 301, 786, 305, 823, 308, 861, 311, 889, 314, 918, 317, 944, 321, 970, 325, 985, 328, 997, 330, 142, 405, 190, 405, 243, 406, 315, 407, 408, 411, 458, 415, 515, 420, 564, 424, 632, 431, 701, 441, 745, 449, 801, 458, 865, 468, 926, 479, 966, 485, 1008, 493, 1037, 499, 1050, 505, 135, 652, 160, 652, 178, 650, 190, 645, 203, 636, 217, 626, 230, 618, 245, 608, 258, 603, 268, 602, 470, 607, 482, 612, 495, 620, 507, 628, 520, 635, 530, 648, 538, 660, 548, 672, 590, 678, 612, 682, 638, 684, 655, 688, 668, 692, 678, 695, 905, 733, 920, 735, 950, 738, 977, 745, 1014, 752, 1045, 758, 1060, 762, 1073, 766, 8, 897, 128, 895, 190, 894, 242, 893, 339, 895, 427, 900, 490, 905, 595, 917, 696, 932, 750, 939, 806, 948, 876, 960, 930, 970, 966, 977, 990, 981, 1015, 986, 1042, 990, 255, 1150, 422, 1158, 585, 1168, 711, 1177, 847, 1189, 887, 1194, 925, 1200, 957, 1205, 980, 1210, 40, 1403, 96, 1406, 130, 1410, 157, 1412], rightCrop),
]

const greenPath = crosses(greenPoints)
const whitePath = crosses(whitePoints)
const yellowPath = crosses(yellowPoints)

// stray one-pixel specks in the lower part of the view
const specks: Pt[] = [
  ...pairs([580, 1290, 590, 1288, 598, 1286, 606, 1280, 618, 1270, 628, 1266, 672, 1270, 632, 1316, 488, 1382, 504, 1378, 514, 1370, 524, 1362, 534, 1358, 576, 1362, 534, 1408, 108, 1460, 580, 1475, 590, 1473, 598, 1470, 606, 1464, 618, 1455, 628, 1453, 672, 1456, 632, 1500, 298, 1514, 205, 1552, 14, 1552, 712, 1360, 694, 1378, 676, 1382, 772, 1290, 868, 1384, 1062, 1448, 1072, 1432, 1168, 1525, 1156, 1540, 976, 1525, 964, 1540, 968, 1560, 886, 1566, 778, 1556, 1132, 1505, 1324, 1505, 1526, 1505], leftCrop),
  ...pairs([463, 1412, 628, 1405, 690, 1395, 752, 1420, 786, 1432, 870, 1462, 912, 1470, 948, 1446, 978, 1482, 1044, 1355, 1104, 1498, 1140, 1447, 1168, 1508, 1270, 1508, 1315, 1508, 1372, 1508, 1392, 1508, 1418, 1508, 1425, 1508, 1432, 1508, 570, 1472, 580, 1478, 595, 1488, 532, 1498, 558, 1505, 655, 1513, 690, 1525, 724, 1498, 760, 1472, 787, 1488, 847, 1513, 883, 1525, 967, 1554, 1009, 1562, 1045, 1540, 775, 1554, 817, 1562], rightCrop),
]
const dotPath = specks.map(([x, y]) => `M${Math.round(x)} ${Math.round(y) + 0.5}h1`).join('')
</script>

<style>
html,
body {
  margin: 0;
  background: #fff;
}
</style>

<style scoped>
.app {
  position: relative;
  width: 1703px;
  height: 887px;
  overflow: hidden;
  font-family: 'Noto Sans CJK SC', 'Liberation Sans', sans-serif;
  color: #222;
  background: #fff;
}

.defs {
  position: absolute;
  width: 0;
  height: 0;
}

/* ribbon */
.ribbon {
  display: flex;
  height: 90px;
  box-sizing: border-box;
  background: #fff;
  border-bottom: 2px solid #d4d4d4;
  font-size: 11px;
  line-height: 14px;
}

.group {
  position: relative;
  display: flex;
  flex-direction: column;
  flex: none;
  box-sizing: border-box;
  height: 87px;
  margin-top: 1px;
  border-right: 1px solid #dcdcdc;
}

.group-body {
  display: flex;
  height: 72px;
}

.group-label {
  display: flex;
  align-items: center;
  justify-content: center;
  height: 15px;
  padding-right: 14px;
  color: #00709a;
  white-space: nowrap;
}

.group-label .caret {
  position: absolute;
  right: 6px;
  bottom: 6px;
  margin: 0;
}

.caret {
  display: block;
  width: 0;
  height: 0;
  border-left: 3px solid transparent;
  border-right: 3px solid transparent;
  border-top: 3px solid #222;
}

.caret.up {
  border-top: 0;
  border-bottom: 3px solid #bbb;
}

.caret.bar {
  position: relative;
  margin-top: 4px;
}

.caret.bar::before {
  content: '';
  position: absolute;
  left: -3px;
  top: -6px;
  width: 6px;
  border-top: 1px solid #222;
}

.caret.grey {
  border-top-color: #bbb;
}

.big {
  display: flex;
  flex-direction: column;
  align-items: center;
  flex: none;
}

.big-icon {
  display: flex;
  align-items: center;
  justify-content: center;
  height: 35px;
  margin-top: 1px;
}

.big-icon.boxed {
  width: 36px;
  margin-top: 0;
  border: 1px solid #e0e0e0;
  border-radius: 4px;
  box-sizing: border-box;
}

.big-label {
  margin-top: 1px;
  height: 14px;
  white-space: nowrap;
}

.big .caret {
  margin-top: 8px;
}

.big.disabled {
  color: #c8c8c8;
}

.small-col {
  display: flex;
  flex-direction: column;
  flex: none;
  box-sizing: border-box;
  margin-top: -1px;
  gap: 4px;
}

.small-row {
  display: flex;
  align-items: center;
  gap: 2px;
  height: 18px;
  white-space: nowrap;
}

.small-row .caret {
  margin-left: 6px;
}

.gallery-wrap {
  display: flex;
  margin-left: 6px;
}

.gallery {
  display: grid;
  grid-template-columns: repeat(3, 28px);
  grid-auto-rows: 30px;
  justify-items: center;
  align-items: center;
  box-sizing: border-box;
  width: 99px;
  height: 66px;
  margin-top: 1px;
  padding: 2px 3px;
  border: 1px solid #dcdcdc;
}

.gallery-scroll {
  display: flex;
  flex-direction: column;
  align-items: center;
  gap: 19px;
  width: 18px;
  padding-top: 11px;
}

.tool-grid {
  display: flex;
  flex-direction: column;
  gap: 9px;
  padding-top: 8px;
}

.tool-row {
  display: flex;
  align-items: center;
  height: 20px;
  gap: 3px;
}

.tool-sep {
  width: 1px;
  height: 20px;
  margin: 0 2px;
  background: #dcdcdc;
}

.tool-text {
  font-family: 'Liberation Sans', sans-serif;
  text-anchor: middle;
}

/* main area */
.workspace {
  display: flex;
  height: 797px;
}

.resource-bar {
  display: flex;
  flex-direction: column;
  flex: none;
  box-sizing: border-box;
  width: 25px;
  margin-right: 6px;
  background: #dcdcdc;
  border-right: 1px solid #a8a8a8;
}

.viewport {
  position: relative;
  flex: 1;
  background: linear-gradient(180deg, #23214a 0%, #0f6a9c 86%, #0f6a9c 100%);
}

.canvas {
  display: block;
}

.logo-main {
  font-family: 'Noto Sans CJK SC', sans-serif;
  font-weight: 900;
  font-size: 48px;
  fill: #2399cf;
  stroke: #d2e6f0;
  stroke-width: 2.500px;
  paint-order: stroke;
}

.logo-url {
  font-family: 'DejaVu Sans', sans-serif;
  font-weight: 700;
  font-size: 15px;
  fill: #2399cf;
  stroke: #d2e6f0;
  stroke-width: 1.500px;
  paint-order: stroke;
}

/* floating dialog */
.dialog {
  position: absolute;
  left: 71px;
  top: 1px;
  box-sizing: border-box;
  width: 328px;
  height: 674px;
  padding: 0 6px;
  background: #efefef;
  font-size: 12px;
  line-height: 16px;
  color: #333;
}

.dialog-title {
  display: flex;
  align-items: center;
  gap: 6px;
  height: 24px;
  margin: 0 -6px 4px;
  padding: 0 9px 0 8px;
  background: #57a1bb;
  color: #e8f4f8;
  font-size: 13px;
}

.dialog-name {
  flex: 1;
  margin-left: 2px;
}

.block {
  box-sizing: border-box;
  margin-bottom: 4px;
  padding: 0 9px 6px;
  background: #fff;
  border-bottom: 2px solid #dadada;
}

.last-block {
  margin-bottom: 0;
  padding-bottom: 8px;
}

.block-head {
  display: flex;
  align-items: center;
  justify-content: space-between;
  height: 30px;
  margin: 0 -3px 0 -2px;
  padding-bottom: 6px;
  box-sizing: border-box;
  font-size: 14px;
  font-weight: 400;
  color: #00709a;
}

.chevron {
  width: 6px;
  height: 6px;
  margin: 4px 2px 0 0;
  border-top: 2px solid #00708f;
  border-left: 2px solid #00708f;
  transform: rotate(45deg);
}

.select-row {
  display: flex;
  gap: 2px;
  height: 32px;
}

.select-field {
  flex: 1;
  line-height: 30px;
  background: #fedd75;
}

.select-btn {
  display: flex;
  align-items: center;
  justify-content: center;
  width: 32px;
  background: #fedd75;
}

.form-row {
  display: flex;
  align-items: center;
  justify-content: space-between;
}

.input {
  box-sizing: border-box;
  width: 82px;
  height: 23px;
  border: 1px solid #a8a8a8;
  background: #fff;
}

.input.num {
  padding-right: 6px;
  font-size: 14px;
  line-height: 22px;
  text-align: right;
}

.input.wide {
  width: 84px;
}

.check-row {
  display: flex;
  align-items: center;
  gap: 6px;
  height: 25px;
}

.check-disabled {
  box-sizing: border-box;
  width: 13px;
  height: 13px;
  border: 1px solid #8a8a8a;
  background: #e4e4e4;
  box-shadow: inset 0 0 0 1px #fff;
}

.filter {
  height: 25px;
}

.muted {
  color: #bdbdbd;
}

.combo {
  display: flex;
  align-items: center;
  justify-content: space-between;
  box-sizing: border-box;
  width: 141px;
  height: 25px;
  padding: 0 7px 0 4px;
  border: 1px solid #a8a8a8;
  background: #fff;
}

.combo .caret {
  border-left-width: 4px;
  border-right-width: 4px;
  border-top-width: 4px;
}

.combo.disabled {
  border-color: #ddd;
  color: #999;
  background: #fdfdfd;
}

/* layer table */
.layer-table {
  box-sizing: border-box;
  height: 284px;
  margin-top: 2px;
  padding: 1px;
  border: 1px solid #dcdcdc;
}

.table-head,
.table-row {
  display: grid;
  grid-template-columns: 150px 85px 59px;
}

.table-head {
  box-sizing: border-box;
  height: 21px;
  background: #f0f0f0;
  border-bottom: 2px solid #dcdcdc;
}

.th {
  display: flex;
  align-items: center;
  box-sizing: border-box;
  padding-left: 6px;
  border-right: 2px solid #dcdcdc;
}

.th.last {
  border-right: 0;
}

.sort-up {
  width: 0;
  height: 0;
  margin-left: 15px;
  border-left: 4px solid transparent;
  border-right: 4px solid transparent;
  border-bottom: 5px solid #222;
}

.table-row {
  height: 20px;
  box-sizing: border-box;
  background: linear-gradient(#ececec, #ececec) left bottom / 100% 1px no-repeat;
}

.table-row:nth-of-type(odd) {
  background-color: #fafafa;
}

.table-row.filler {
  height: 3px;
  background: #fff;
}

.td {
  display: flex;
  align-items: center;
  box-sizing: border-box;
  padding-left: 6px;
  border-right: 1px solid #ececec;
}

.td.first {
  padding-left: 9px;
  border-right: 1px solid #000;
}

.td.last {
  padding-left: 4px;
  border-right: 0;
}

.branch {
  position: relative;
  flex: none;
  box-sizing: border-box;
  width: 12px;
  height: 20px;
  border-left: 1px dotted #888;
}

.branch::after {
  content: '';
  position: absolute;
  left: 0;
  top: 9px;
  width: 9px;
  border-top: 1px dotted #888;
}

.branch.top {
  align-self: flex-end;
  height: 10px;
}

.branch.top::after {
  top: 0;
}

.branch.end {
  align-self: flex-start;
  height: 10px;
}

.stack-icon {
  flex: none;
  margin: 0 0 0 -2px;
}

.box {
  display: flex;
  align-items: center;
  justify-content: center;
  flex: none;
  box-sizing: border-box;
  width: 12px;
  height: 12px;
  border: 1px solid #222;
  background: #fff;
}

.box svg {
  flex: none;
}

.layer-name {
  margin-left: 5px;
}

.layer-name.bold {
  margin-left: 2px;
  font-weight: 700;
}

.hscroll {
  display: flex;
  align-items: center;
  height: 16px;
  margin-top: 1px;
  background: linear-gradient(180deg, #f6f6f6, #ececec);
}

.hthumb {
  box-sizing: border-box;
  width: 141px;
  height: 15px;
  margin-left: 9px;
  border: 1px solid #999;
  border-radius: 2px;
  background: linear-gradient(180deg, #eee, #c8c8c8);
  font-size: 9px;
  line-height: 12px;
  text-align: center;
  color: #555;
}

.arrow-left,
.arrow-right {
  width: 0;
  height: 0;
  border-top: 4px solid transparent;
  border-bottom: 4px solid transparent;
}

.arrow-left {
  margin-left: 6px;
  border-right: 4px solid #444;
}

.arrow-right {
  margin-left: auto;
  margin-right: 6px;
  border-left: 4px solid #444;
}

.show-row {
  margin-top: 3px;
}

.add-row {
  margin-top: 2px;
}

.icon-btn {
  display: flex;
  align-items: center;
  justify-content: center;
  box-sizing: border-box;
  width: 32px;
  height: 32px;
  border: 1px solid #aaa;
  background: #fff;
}

.dialog-foot {
  display: flex;
  justify-content: flex-end;
  padding: 11px 10px 0 0;
}

.close-btn {
  width: 54px;
  height: 25px;
  border: 0;
  padding: 0;
  background: #76b5cb;
  color: #e8f4f8;
  font: inherit;
}
</style>
